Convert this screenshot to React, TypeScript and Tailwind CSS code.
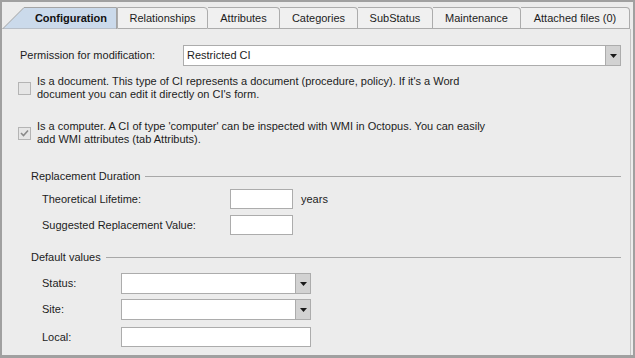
import React from "react";

const tabs = ["Relationships", "Attributes", "Categories", "SubStatus", "Maintenance", "Attached files (0)"];
const tabWidths = ["w-[91px]", "w-[72px]", "w-[78px]", "w-[75px]", "w-[88px]", "w-[109px]"];

const Arrow = () => (
  <svg width="7" height="4" viewBox="0 0 7 4">
    <path d="M0 0H7L3.5 4Z" fill="#1a1a1a" />
  </svg>
);

const Select = ({ value, className }: { value?: string; className: string }) => (
  <div className={`flex h-[21px] border border-[#acacac] bg-white ${className}`}>
    <div className="flex flex-1 items-center pl-[3px]">{value}</div>
    <div className="flex w-[15px] items-center justify-center border-l border-[#acacac] bg-[#d2d2d2]">
      <Arrow />
    </div>
  </div>
);

const Input = ({ className }: { className: string }) => (
  <div className={`h-[20px] border border-[#acacac] bg-white ${className}`} />
);

const GroupHeader = ({ title, className }: { title: string; className: string }) => (
  <div className={`flex h-[13px] items-center ml-[11px] ${className}`}>
    <span>{title}</span>
    <div className="ml-[5px] h-px flex-1 bg-[#a8a8a8]" />
  </div>
);

const Check = ({ checked, lines, className }: { checked?: boolean; lines: string[]; className: string }) => (
  <div className={`-ml-[2px] flex items-center ${className}`}>
    <div className="flex h-[13px] w-[13px] items-center justify-center border border-[#b4b4b4] bg-[#e6e6e6]">
      {checked && (
        <svg width="9" height="8" viewBox="0 0 9 8">
          <path d="M1 4L3.5 6.5L8 1.5" stroke="#8a8a8a" strokeWidth="1.6" fill="none" />
        </svg>
      )}
    </div>
    <div className="ml-[6px] leading-[13px]">
      {lines[0]}
      <br />
      {lines[1]}
    </div>
  </div>
);

export default function App() {
  return (
    <div className="flex h-[358px] w-[635px] flex-col overflow-hidden border-l-2 border-t-2 border-r-2 border-b-[3px] border-[#a0a0a0] bg-[#ececec] font-['Liberation_Sans',Arial,sans-serif] text-[11px] text-[#1c1c1c]">
      {/* tab strip */}
      <div className="flex h-[27px] shrink-0 items-end">
        <div className="relative flex h-[22px] w-[115px] items-center justify-end pr-[10px]">
          <svg className="absolute inset-0" width="115" height="22" viewBox="0 0 115 22">
            <path d="M0.5 22L22 0.5H114.5V22Z" fill="#cbdaeb" stroke="#a4a4a4" />
          </svg>
          <span className="relative font-bold text-[#111]">Configuration</span>
        </div>
        {tabs.map((t, i) => (
          <div
            key={t}
            className={`flex h-[22px] items-center justify-center rounded-tr-[4px] border-t border-r border-b border-[#acacac] bg-[#f0f0f0] ${tabWidths[i]} ${i === 0 ? "border-l" : ""}`}
          >
            {t}
          </div>
        ))}
      </div>

      {/* content */}
      <div className="mr-[2px] flex flex-1 flex-col border-r border-[#c4c4c4] pl-[18px] pr-[9px]">
        <div className="mt-[16px] flex items-center">
          <span className="w-[163px]">Permission for modification:</span>
          <Select value="Restricted CI" className="flex-1" />
        </div>

        <Check
          className="mt-[9px]"
          lines={[
            "Is a document. This type of CI represents a document (procedure, policy). If it's a Word",
            "document you can edit it directly on CI's form.",
          ]}
        />
        <Check
          checked
          className="mt-[19px]"
          lines={[
            "Is a computer. A CI of type 'computer' can be inspected with WMI in Octopus. You can easily",
            "add WMI attributes (tab Attributs).",
          ]}
        />

        <GroupHeader title="Replacement Duration" className="mt-[24px]" />
        <div className="ml-[22px] mt-[6px] flex items-center">
          <span className="w-[188px]">Theoretical Lifetime:</span>
          <Input className="w-[63px]" />
          <span className="ml-[8px]">years</span>
        </div>
        <div className="ml-[22px] mt-[6px] flex items-center">
          <span className="w-[188px]">Suggested Replacement Value:</span>
          <Input className="w-[63px]" />
        </div>

        <GroupHeader title="Default values" className="mt-[16px]" />
        <div className="ml-[22px] mt-[9px] flex items-center">
          <span className="w-[79px]">Status:</span>
          <Select className="w-[190px]" />
        </div>
        <div className="ml-[22px] mt-[5px] flex items-center">
          <span className="w-[79px]">Site:</span>
          <Select className="w-[190px]" />
        </div>
        <div className="ml-[22px] mt-[7px] flex items-center">
          <span className="w-[79px]">Local:</span>
          <Input className="w-[190px]" />
        </div>
      </div>
    </div>
  );
}
